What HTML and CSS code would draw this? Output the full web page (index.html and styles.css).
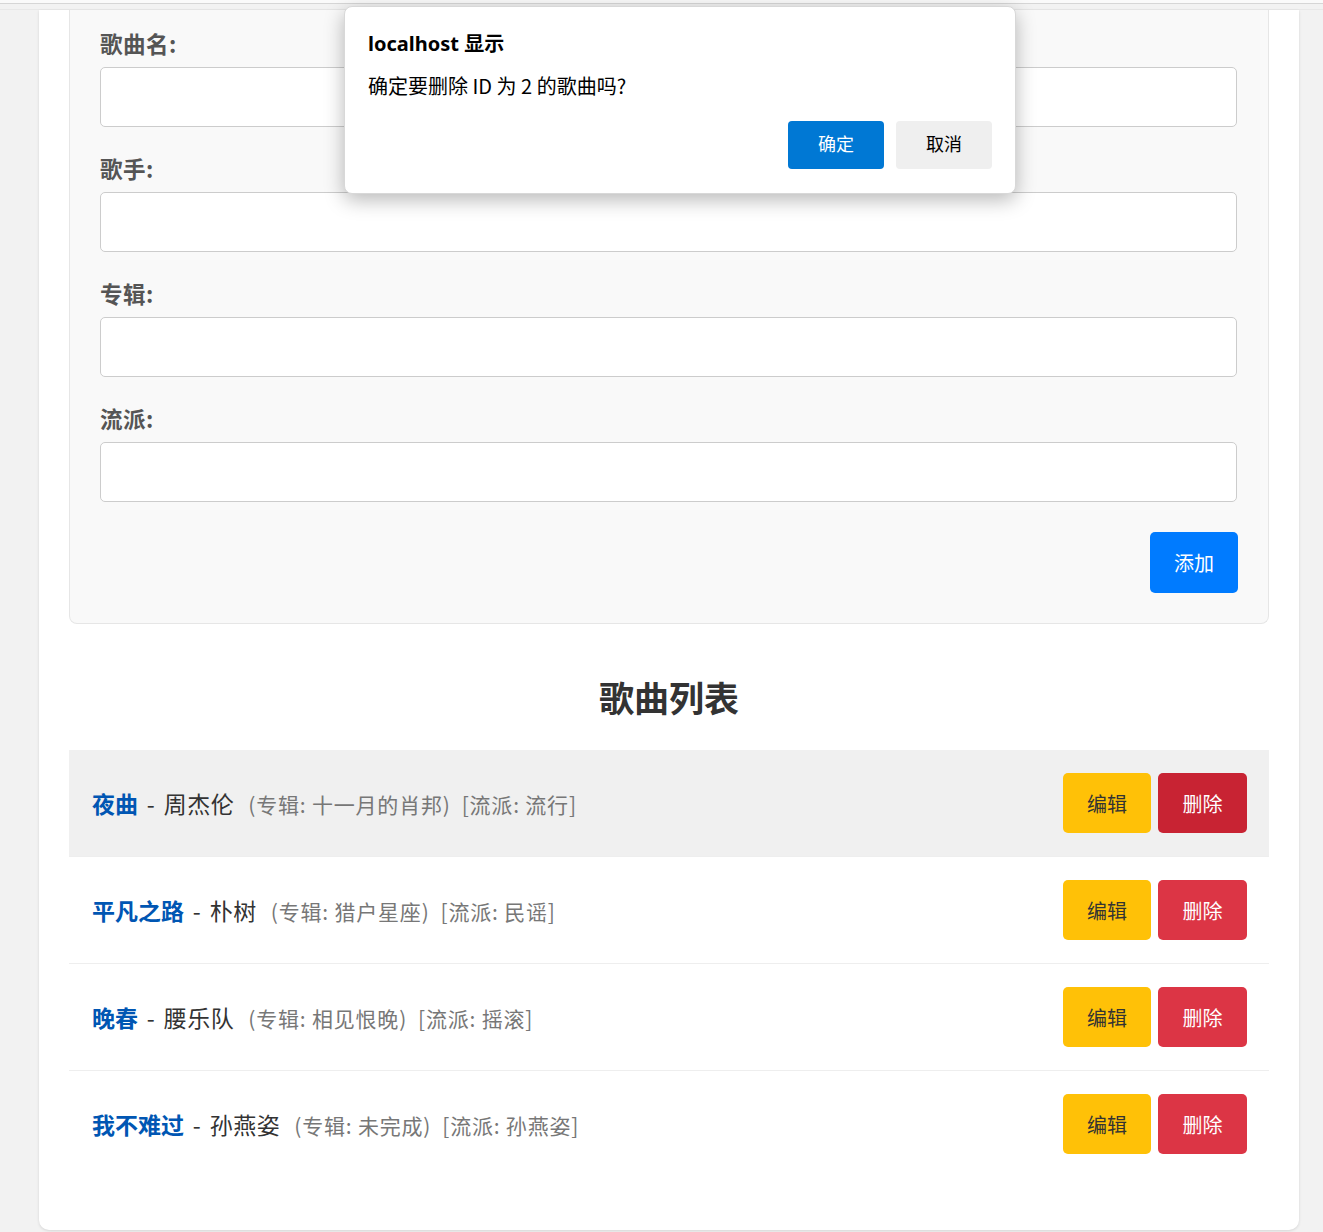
FILE: index.html
```html
<!DOCTYPE html>
<html lang="zh-CN">
<head>
<meta charset="utf-8">
<title>歌曲管理</title>
<link rel="stylesheet" href="styles.css">
</head>
<body>
<div class="topstrip"></div>
<div class="container">
  <form class="form-box">
    <div class="field">
      <label class="label">歌曲名:</label>
      <input class="input" type="text">
    </div>
    <div class="field">
      <label class="label">歌手:</label>
      <input class="input" type="text">
    </div>
    <div class="field">
      <label class="label">专辑:</label>
      <input class="input" type="text">
    </div>
    <div class="field">
      <label class="label">流派:</label>
      <input class="input" type="text">
    </div>
    <div class="actions">
      <button type="button" class="btn-add">添加</button>
    </div>
  </form>

  <h2 class="list-title">歌曲列表</h2>

  <ul class="song-list">
    <li class="song-row is-hover">
      <div class="song-info"><span class="song-name">夜曲</span><span class="song-artist"> - 周杰伦</span><span class="song-meta">(专辑: 十一月的肖邦)</span><span class="song-meta">[流派: 流行]</span></div>
      <div class="song-actions"><button class="btn btn-edit">编辑</button><button class="btn btn-del btn-del-hover">删除</button></div>
    </li>
    <li class="song-row">
      <div class="song-info"><span class="song-name">平凡之路</span><span class="song-artist"> - 朴树</span><span class="song-meta">(专辑: 猎户星座)</span><span class="song-meta">[流派: 民谣]</span></div>
      <div class="song-actions"><button class="btn btn-edit">编辑</button><button class="btn btn-del">删除</button></div>
    </li>
    <li class="song-row">
      <div class="song-info"><span class="song-name">晚春</span><span class="song-artist"> - 腰乐队</span><span class="song-meta">(专辑: 相见恨晚)</span><span class="song-meta">[流派: 摇滚]</span></div>
      <div class="song-actions"><button class="btn btn-edit">编辑</button><button class="btn btn-del">删除</button></div>
    </li>
    <li class="song-row">
      <div class="song-info"><span class="song-name">我不难过</span><span class="song-artist"> - 孙燕姿</span><span class="song-meta">(专辑: 未完成)</span><span class="song-meta">[流派: 孙燕姿]</span></div>
      <div class="song-actions"><button class="btn btn-edit">编辑</button><button class="btn btn-del">删除</button></div>
    </li>
  </ul>
</div>

<div class="dialog">
  <div class="dialog-title">localhost 显示</div>
  <div class="dialog-msg">确定要删除 ID 为 2 的歌曲吗?</div>
  <div class="dialog-actions">
    <button class="dbtn dbtn-ok">确定</button>
    <button class="dbtn dbtn-cancel">取消</button>
  </div>
</div>
</body>
</html>
```

FILE: styles.css
```css
* { box-sizing: border-box; }

html, body {
  margin: 0;
  padding: 0;
}

body {
  background: #f2f2f2;
  font-family: "Noto Sans CJK SC", "Noto Sans", sans-serif;
  color: #333;
  height: 1232px;
  overflow: hidden;
}

.topstrip {
  height: 10px;
  background: #f2f2f2;
  border-top: 3px solid #fafafa;
  box-shadow: inset 0 1px 0 #d6d6d6;
  border-bottom: 1px solid #e8e8e8;
}

.container {
  width: 1260px;
  margin-left: 39px;
  background: #fff;
  padding: 0 30px 53px;
  border-radius: 0 0 10px 10px;
  box-shadow: 0 1px 3px rgba(0,0,0,0.12);
}

.form-box {
  background: #f9f9f9;
  border: 1px solid #e6e6e6;
  border-top: none;
  border-radius: 0 0 8px 8px;
  padding: 18px 31px 30px 30px;
  display: flex;
  flex-direction: column;
}

.field {
  display: flex;
  flex-direction: column;
  margin-bottom: 26px;
}

.label {
  font-size: 22.5px;
  font-weight: bold;
  color: #555;
  line-height: 30px;
  height: 30px;
  margin-bottom: 9px;
  letter-spacing: 0.5px;
}

.input {
  height: 60px;
  border: 1px solid #ccc;
  border-radius: 5px;
  background: #fff;
  font-size: 18px;
  padding: 0 12px;
}

.actions {
  display: flex;
  justify-content: flex-end;
  margin-top: 4px;
}

.btn-add {
  height: 61px;
  width: 88px;
  border: none;
  border-radius: 5px;
  background: #007bff;
  color: #fff;
  font-family: inherit;
  font-size: 20px;
  margin-right: -1px;
}

.list-title {
  text-align: center;
  font-size: 35px;
  font-weight: bold;
  color: #333;
  margin: 52px 0 32px;
  line-height: 42px;
}

.song-list {
  list-style: none;
  margin: 0;
  padding: 0;
}

.song-row {
  display: flex;
  align-items: center;
  justify-content: space-between;
  padding: 23px 22px 23px 23px;
  border-bottom: 1px solid #eee;
}

.song-row:last-child {
  border-bottom: none;
}

.song-row.is-hover {
  background: #f0f0f0;
}

.song-info {
  font-size: 23px;
  line-height: 30px;
  white-space: nowrap;
  padding-top: 1px;
}

.song-name {
  color: #0056b3;
  font-weight: bold;
}

.song-artist {
  color: #333;
  word-spacing: 3px;
  letter-spacing: 0.5px;
}

.song-meta {
  color: #777;
  font-size: 21px;
  letter-spacing: 0.8px;
  margin-left: 14px;
}

.song-meta + .song-meta {
  margin-left: 11px;
}

.song-actions {
  display: flex;
  gap: 7px;
}

.btn {
  height: 60px;
  width: 88px;
  border: none;
  border-radius: 5px;
  font-family: inherit;
  font-size: 20px;
}

.btn-edit {
  background: #ffc107;
  color: #333;
}

.btn-del {
  background: #dc3545;
  color: #fff;
  width: 89px;
}

.btn-del-hover {
  background: #c82333;
}

.dialog {
  position: absolute;
  left: 344px;
  top: 6px;
  width: 672px;
  height: 188px;
  background: #fff;
  border: 1px solid #d8d8d8;
  border-radius: 8px;
  box-shadow: 0 6px 20px rgba(0,0,0,0.28);
  padding: 23px 23px 0 23px;
  color: #000;
}

.dialog-title {
  font-family: "Noto Sans", "Noto Sans CJK SC", sans-serif;
  font-weight: bold;
  font-size: 20px;
  line-height: 28px;
  height: 28px;
}

.dialog-msg {
  font-family: "Noto Sans CJK SC", sans-serif;
  font-size: 20px;
  line-height: 28px;
  margin-top: 14px;
}

.dialog-actions {
  display: flex;
  justify-content: flex-end;
  gap: 12px;
  margin-top: 21px;
}

.dbtn {
  width: 96px;
  height: 48px;
  border: none;
  border-radius: 4px;
  font-family: "Noto Sans CJK SC", sans-serif;
  font-size: 18px;
  line-height: 44px;
  padding: 0 0 4px;
}

.dbtn-ok {
  background: #0078d4;
  color: #fff;
}

.dbtn-cancel {
  background: #efefef;
  color: #000;
}
```
